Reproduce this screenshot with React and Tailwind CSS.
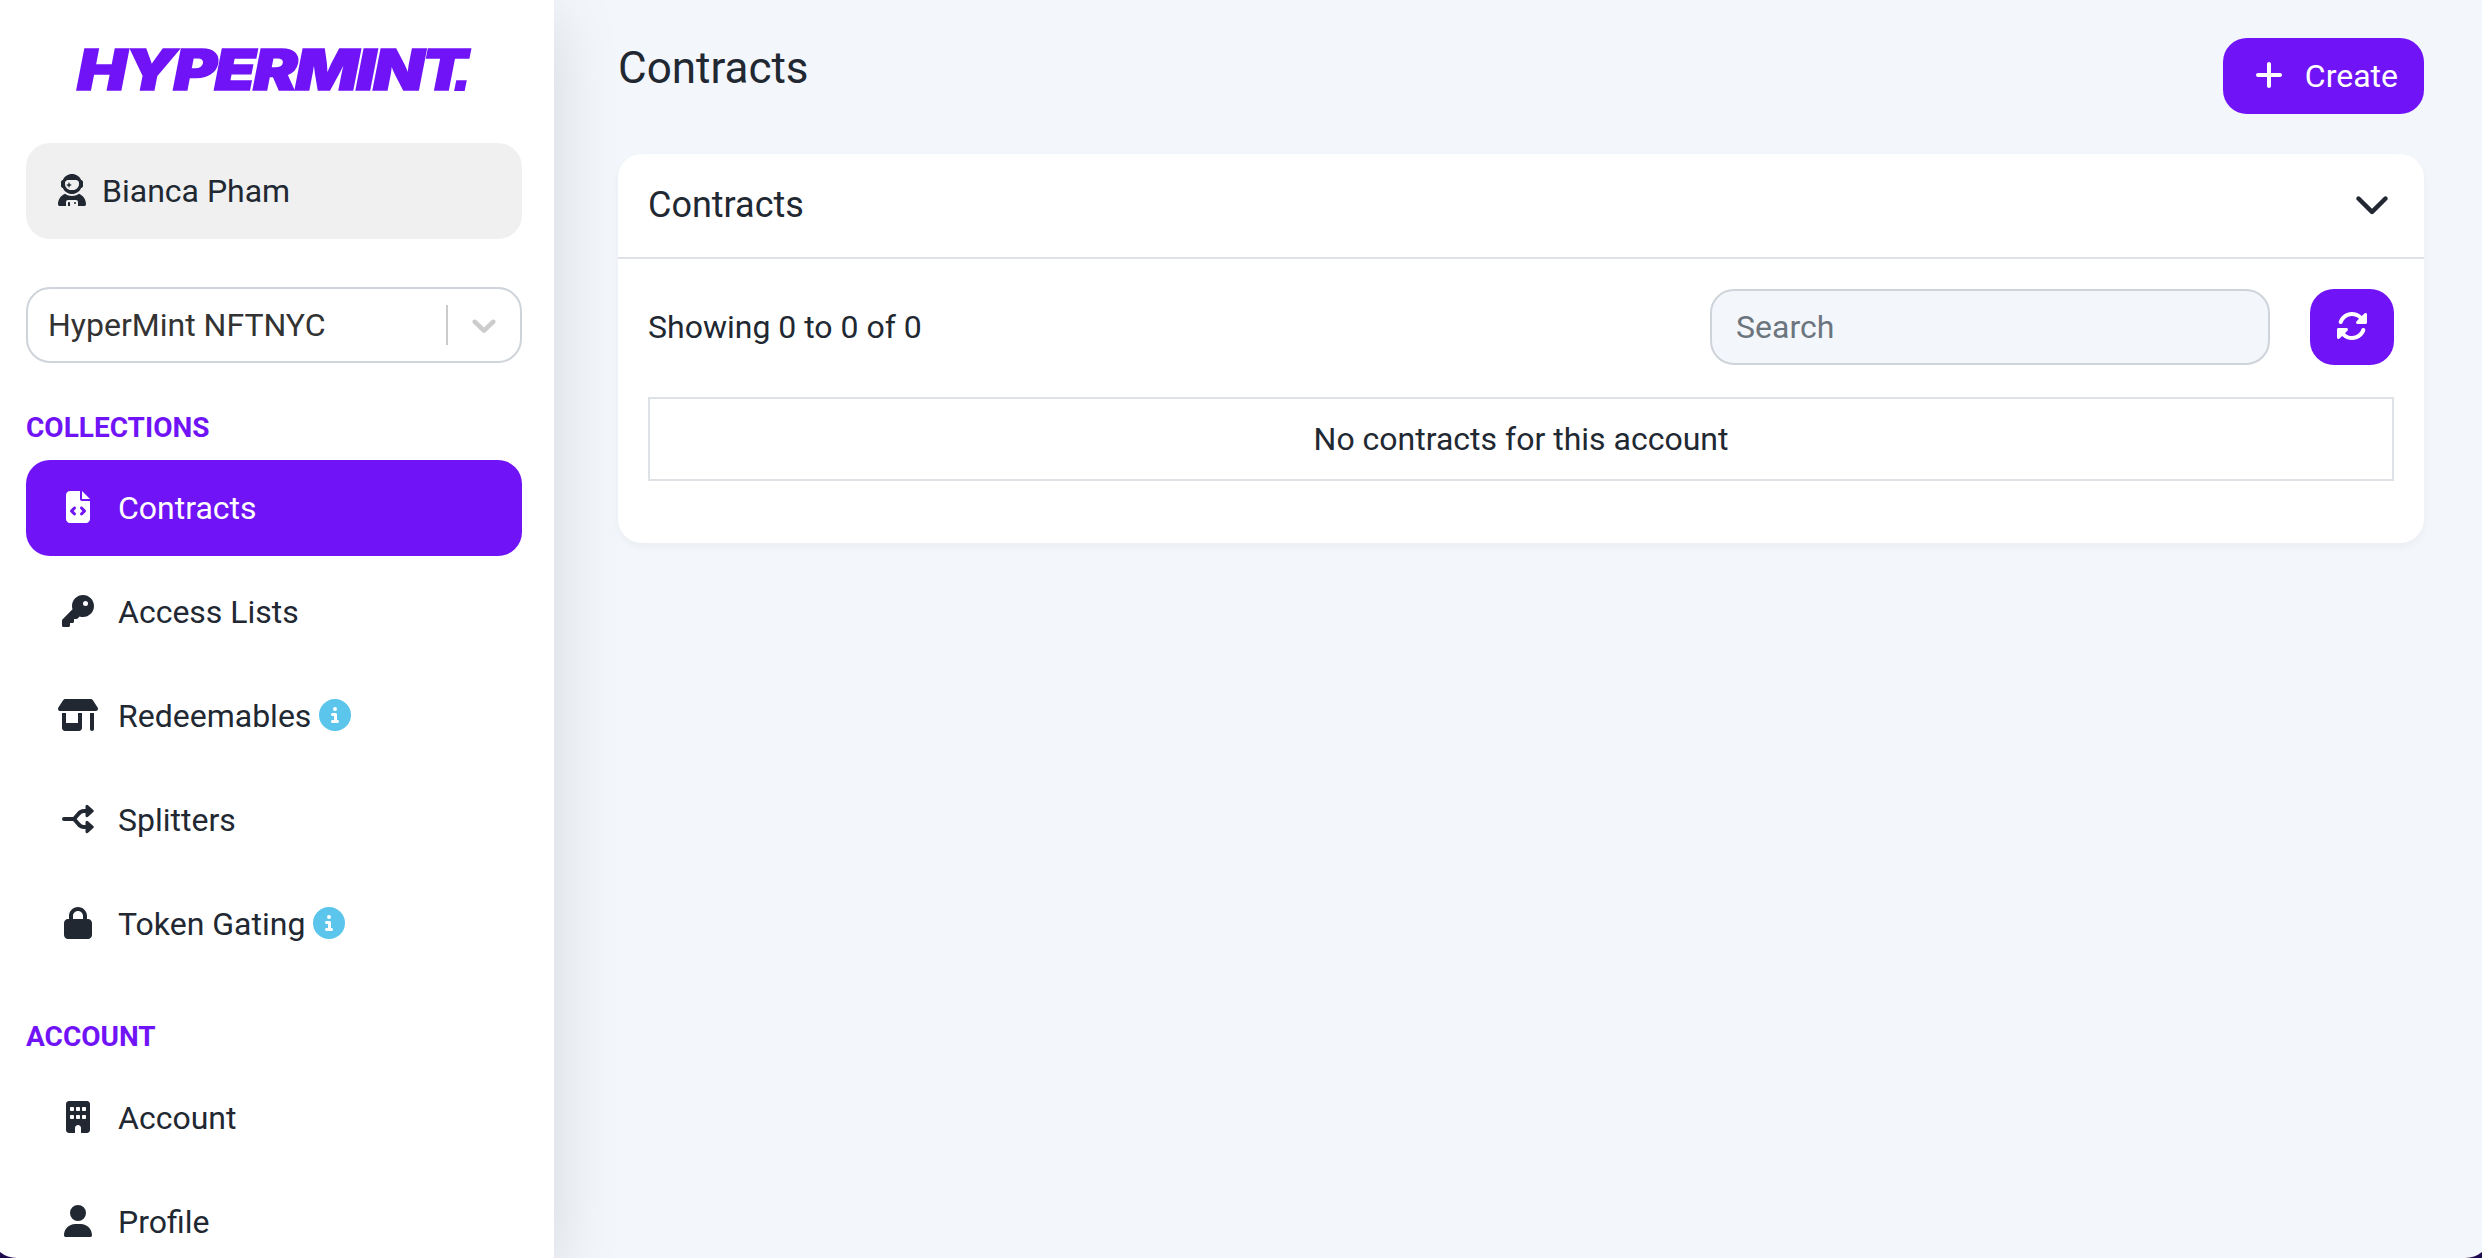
import React, { useState } from 'react';
import {
    FaUserAstronaut,
    FaFileCode,
    FaKey,
    FaShop,
    FaLock,
    FaBuilding,
    FaUser,
    FaCircleInfo,
    FaPlus,
    FaChevronDown,
    FaRotate,
} from 'react-icons/fa6';

function SplitIcon() {
    return (
        <svg viewBox="0 0 512 512" className="w-8 h-8" fill="none" stroke="currentColor" strokeWidth="64" strokeLinecap="round" strokeLinejoin="round">
            <path d="M32 256H192L262 176Q300 128 350 128H400" />
            <path d="M192 256L262 336Q300 384 350 384H400" />
            <path d="M400 52L484 128L400 204Z" fill="currentColor" strokeWidth="48" />
            <path d="M400 308L484 384L400 460Z" fill="currentColor" strokeWidth="48" />
        </svg>
    );
}

const collectionLinks = [
    { name: 'Contracts', icon: <FaFileCode /> },
    { name: 'Access Lists', icon: <FaKey /> },
    { name: 'Redeemables', icon: <FaShop className="w-10 h-8 shrink-0" />, info: true },
    { name: 'Splitters', icon: <SplitIcon /> },
    { name: 'Token Gating', icon: <FaLock />, info: true },
];

const accountLinks = [
    { name: 'Account', icon: <FaBuilding /> },
    { name: 'Profile', icon: <FaUser /> },
];

function NavItem({ item, active, onClick }) {
    return (
        <a
            href="#"
            onClick={onClick}
            className={`flex items-center h-24 shrink-0 pl-8 rounded-3xl ${active ? 'bg-[#7014f7] text-white' : ''}`}
        >
            <span className="flex justify-center w-10 mr-5 mb-0.5">{item.icon}</span>
            <span>{item.name}</span>
            {item.info && <FaCircleInfo className="ml-2 mb-0.5 text-[#5bc5ec]" />}
        </a>
    );
}

function Logo() {
    return (
        <svg viewBox="0 0 400 50" className="w-[400px] h-[50px] ml-[50px] shrink-0 overflow-visible" fill="#7014f7" stroke="#7014f7">
            <text
                x="1"
                y="45.5"
                textLength="388"
                lengthAdjust="spacingAndGlyphs"
                letterSpacing="-2"
                strokeWidth="1.5"
                className="font-['Inter',sans-serif] font-black italic text-[56px]"
            >
                HYPERMINT
            </text>
            <text x="378" y="45.5" strokeWidth="2" className="font-['Liberation_Sans',sans-serif] font-bold italic text-[60px]">.</text>
        </svg>
    );
}

function Sidebar() {
    const [current, setCurrent] = useState('Contracts');

    return (
        <aside className="relative z-10 w-[554px] shrink-0 h-full pl-[26px] pr-8 pt-11 flex flex-col bg-white shadow-[0_16px_64px_rgba(0,0,0,0.13)]">
            <Logo />

            {/* User */}
            <div className="flex items-center h-24 shrink-0 mt-[49px] pl-8 rounded-3xl bg-[#f0f0f0]">
                <FaUserAstronaut className="w-7 mr-4 mb-0.5" />
                <span>Bianca Pham</span>
            </div>

            {/* Account select */}
            <div className="flex items-center h-[76px] shrink-0 mt-12 pl-5 rounded-3xl border-2 border-[#ced4da] text-[#333333]">
                <span className="flex-1">HyperMint NFTNYC</span>
                <span className="w-0.5 h-10 bg-[#cccccc]"></span>
                <svg viewBox="0 0 20 20" className="w-10 h-10 mx-4" fill="#cccccc">
                    <path d="M4.516 7.548c0.436-0.446 1.043-0.481 1.576 0l3.908 3.747 3.908-3.747c0.533-0.481 1.141-0.446 1.574 0 0.436 0.445 0.408 1.197 0 1.615-0.406 0.418-4.695 4.502-4.695 4.502-0.217 0.223-0.502 0.335-0.787 0.335s-0.57-0.112-0.789-0.335c0 0-4.287-4.084-4.695-4.502s-0.436-1.17 0-1.615z" />
                </svg>
            </div>

            <h2 className="mt-[46px] mb-[13px] text-[28px] leading-[38px] font-bold text-[#7014f7]">COLLECTIONS</h2>
            <nav className="flex flex-col gap-2">
                {collectionLinks.map((item) => (
                    <NavItem key={item.name} item={item} active={current === item.name} onClick={() => setCurrent(item.name)} />
                ))}
            </nav>

            <h2 className="mt-[46px] mb-[14px] text-[28px] leading-[38px] font-bold text-[#7014f7]">ACCOUNT</h2>
            <nav className="flex flex-col gap-2">
                {accountLinks.map((item) => (
                    <NavItem key={item.name} item={item} active={current === item.name} onClick={() => setCurrent(item.name)} />
                ))}
            </nav>
        </aside>
    );
}

function App() {
    return (
        <div className="relative flex h-screen overflow-hidden bg-[#f3f6fb] text-[#212832] font-['Roboto',sans-serif] text-[32px] leading-[48px]">
            <Sidebar />

            {/* Main Content */}
            <main className="flex-1 pl-16 pr-[58px] pt-[38px]">
                <header className="flex justify-between items-start">
                    <h1 className="text-[44px] leading-[60px]">Contracts</h1>
                    <button className="flex items-center h-[76px] pl-8 pr-[26px] rounded-3xl bg-[#7014f7] text-white">
                        <FaPlus className="w-7 mr-[22px] mb-0.5" />
                        <span>Create</span>
                    </button>
                </header>

                <section className="mt-10 h-[389px] rounded-3xl bg-white shadow-[0_4px_8px_rgba(0,0,0,0.04)]">
                    <div className="flex justify-between items-center h-[105px] pl-[30px] pr-[34px] pb-0.5 border-b-2 border-[#dee2e6]">
                        <h2 className="text-[36px]">Contracts</h2>
                        <FaChevronDown className="w-9 h-9 mb-[3px]" />
                    </div>

                    <div className="px-[30px] pt-[30px]">
                        <div className="flex items-center">
                            <p className="flex-1">Showing 0 to 0 of 0</p>
                            <input
                                type="text"
                                placeholder="Search"
                                className="w-[560px] h-[76px] px-6 rounded-3xl border-2 border-[#ced4da] bg-[#f3f6fb] placeholder:text-[#6c757d]"
                            />
                            <button className="flex justify-center items-center w-[84px] h-[76px] ml-10 rounded-3xl bg-[#7014f7] text-white">
                                <FaRotate className="mb-0.5" />
                            </button>
                        </div>
                        <div className="flex justify-center items-center h-[84px] mt-8 border-2 border-[#dee2e6]">
                            No contracts for this account
                        </div>
                    </div>
                </section>
            </main>

            {/* Window corners */}
            <svg viewBox="0 0 17 6" className="absolute z-20 left-0 bottom-0 w-[17px] h-1.5" fill="#1f0a4d">
                <path d="M0 0A27 27 0 0 0 17 6H0Z" />
            </svg>
            <svg viewBox="0 0 17 6" className="absolute z-20 right-0 bottom-0 w-[17px] h-1.5" fill="#1f0a4d">
                <path d="M17 0A27 27 0 0 1 0 6H17Z" />
            </svg>
        </div>
    );
}

export default App;
